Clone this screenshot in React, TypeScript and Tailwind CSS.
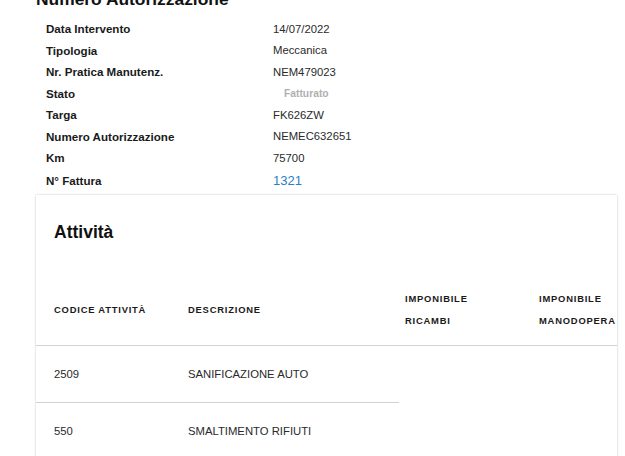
const details: { label: string; value: string; kind?: "status" | "link" }[] = [
  { label: "Data Intervento", value: "14/07/2022" },
  { label: "Tipologia", value: "Meccanica" },
  { label: "Nr. Pratica Manutenz.", value: "NEM479023" },
  { label: "Stato", value: "Fatturato", kind: "status" },
  { label: "Targa", value: "FK626ZW" },
  { label: "Numero Autorizzazione", value: "NEMEC632651" },
  { label: "Km", value: "75700" },
  { label: "N° Fattura", value: "1321", kind: "link" },
];

const activities = [
  { code: "2509", description: "SANIFICAZIONE AUTO" },
  { code: "550", description: "SMALTIMENTO RIFIUTI" },
];

function DetailRow({ label, value, kind }: (typeof details)[number]) {
  return (
    <div className={kind === "link" ? "flex h-[23px] items-center" : "flex h-[21.5px] items-center"}>
      <span className="w-[227px] shrink-0 text-[11.6px] font-bold text-[#1a1a1a]">{label}</span>
      {kind === "status" ? (
        <span className="pl-[11px] text-[10.3px] font-bold text-[#b0b0b0]">{value}</span>
      ) : kind === "link" ? (
        <span className="text-[13px] text-[#2a7fc4]">{value}</span>
      ) : (
        <span className="text-[11.3px] text-[#2a2a2a]">{value}</span>
      )}
    </div>
  );
}

export default function App() {
  return (
    <div className="h-[456px] w-[625px] overflow-hidden bg-white font-['Liberation_Sans',Arial,sans-serif]">
      <h2 className="-mt-[11px] pl-[36px] text-[17.4px] leading-[20.4px] font-bold text-[#111]">Numero Autorizzazione</h2>
      <div className="mt-[9px] pl-[46px]">
        {details.map((row) => (
          <DetailRow key={row.label} {...row} />
        ))}
      </div>
      <div className="mt-[3.5px] ml-[36px] w-[581px] overflow-hidden bg-white shadow-[0_0_2px_rgba(0,0,0,0.25)]">
        <h3 className="mt-[27px] pl-[18px] text-[17.5px] leading-[20px] font-bold text-[#111]">Attività</h3>
        <div className="mt-[32px] flex h-[72px] items-center border-b border-[#d2d2d2] text-[9.4px] leading-[22px] font-bold tracking-[0.085em] text-[#1a1a1a] uppercase">
          <div className="w-[134px] shrink-0 pl-[18px]">Codice attività</div>
          <div className="w-[217px] shrink-0 pl-[18px]">Descrizione</div>
          <div className="w-[134px] shrink-0 pl-[18px]">
            Imponibile
            <br />
            Ricambi
          </div>
          <div className="shrink-0 pl-[18px] whitespace-nowrap">
            Imponibile
            <br />
            Manodopera
          </div>
        </div>
        {activities.map((a) => (
          <div key={a.code} className="flex h-[57px] w-[363px] items-center border-b border-[#d2d2d2] text-[11.3px] text-[#2a2a2a]">
            <div className="w-[134px] shrink-0 pl-[18px]">{a.code}</div>
            <div className="shrink-0 pl-[18px]">{a.description}</div>
          </div>
        ))}
      </div>
    </div>
  );
}
